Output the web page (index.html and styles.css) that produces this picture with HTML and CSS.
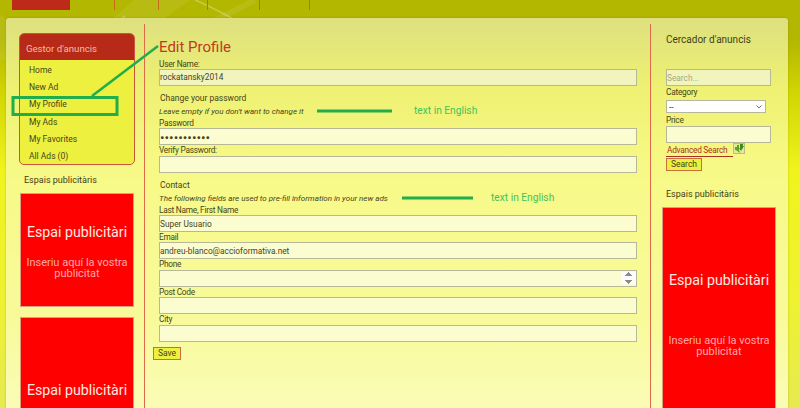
FILE: index.html
```html
<!DOCTYPE html>
<html lang="en">
<head>
<meta charset="utf-8">
<title>Edit Profile</title>
<link rel="stylesheet" href="styles.css">
</head>
<body>
<svg class="swirl" width="800" height="408" viewBox="0 0 800 408" fill="none" aria-hidden="true">
  <path d="M0 14C30 48 80 46 118 14L134 0L190 0C160 20 140 40 110 60L0 60Z" fill="#fff" opacity=".07"/>
  <path d="M195 0C215 8 230 18 255 30" stroke="#fff" stroke-width="1.5" opacity=".28"/>
  <path d="M255 0C225 16 205 26 170 40" stroke="#fff" stroke-width="6" opacity=".08"/>
  <path d="M6 28C40 50 90 46 125 16" stroke="#fff" stroke-width="2" opacity=".25"/>
</svg>
<div class="topbar">
  <div class="tab"></div>
  <div class="ticks"><i></i><i></i><i></i><i></i><i></i></div>
</div>
<div class="panel">
  <aside class="left">
    <nav class="menu">
      <h3 class="menu-title">Gestor d'anuncis</h3>
      <ul class="menu-list">
        <li>Home</li>
        <li>New Ad</li>
        <li>My Profile</li>
        <li>My Ads</li>
        <li>My Favorites</li>
        <li>All Ads (0)</li>
      </ul>
    </nav>
    <h4 class="side-title side-title-left">Espais publicitàris</h4>
    <div class="ad ad-one">
      <p class="ad-big">Espai publicitàri</p>
      <p class="ad-small">Inseriu aquí la vostra publicitat</p>
    </div>
    <div class="ad ad-two">
      <p class="ad-big">Espai publicitàri</p>
    </div>
  </aside>
  <main class="main">
    <h1 class="title">Edit Profile</h1>
    <form class="form">
      <label class="lbl">User Name:</label>
      <input class="field field-ro" type="text" value="rockatansky2014" readonly>
      <div class="legend">Change your password</div>
      <div class="note">Leave empty if you don't want to change it</div>
      <label class="lbl">Password</label>
      <input class="field field-pass" type="password" value="abcdefghijk">
      <label class="lbl">Verify Password:</label>
      <input class="field" type="password">
      <div class="legend">Contact</div>
      <div class="note">The following fields are used to pre-fill information in your new ads</div>
      <label class="lbl">Last Name, First Name</label>
      <input class="field" type="text" value="Super Usuario">
      <label class="lbl">Email</label>
      <input class="field" type="text" value="andreu-blanco@accioformativa.net">
      <label class="lbl">Phone</label>
      <input class="field" type="number">
      <label class="lbl">Post Code</label>
      <input class="field" type="text">
      <label class="lbl">City</label>
      <input class="field" type="text">
      <button class="btn btn-save" type="button">Save</button>
    </form>
  </main>
  <aside class="right">
    <h4 class="side-title search-title">Cercador d'anuncis</h4>
    <input class="field field-side field-ro" type="text" placeholder="Search...">
    <label class="lbl lbl-side">Category</label>
    <select class="select"><option>--</option></select>
    <label class="lbl lbl-side">Price</label>
    <input class="field field-side" type="text">
    <div class="adv">
      <a class="adv-link">Advanced Search</a>
      <svg class="adv-icon" width="12" height="11" viewBox="0 0 12 11" aria-hidden="true">
        <rect x=".5" y=".5" width="11" height="10" fill="#e4e89a" stroke="#b9bd8a"/>
        <path d="M2 4h2V2h2v5l1 3-4-3H2z" fill="#5aa51e"/>
        <path d="M7 1h3v2h1L8 8 6 5h1z" fill="#3f8f14"/>
      </svg>
    </div>
    <button class="btn btn-search" type="button">Search</button>
    <h4 class="side-title side-title-right">Espais publicitàris</h4>
    <div class="ad ad-tall">
      <p class="ad-big">Espai publicitàri</p>
      <p class="ad-small">Inseriu aquí la vostra publicitat</p>
    </div>
  </aside>
</div>
<svg class="marks" width="800" height="408" viewBox="0 0 800 408" fill="none" aria-hidden="true">
  <rect x="13" y="97.5" width="104" height="17" stroke="#1fae4b" stroke-width="3"/>
  <path d="M92 96L158 46" stroke="#1fae4b" stroke-width="2.5"/>
  <path d="M317 111H392M402 198H473" stroke="#1fae4b" stroke-width="3"/>
</svg>
<span class="mark-text mark-one">text in English</span>
<span class="mark-text mark-two">text in English</span>
</body>
</html>
```
FILE: styles.css
```css
* { box-sizing: border-box; }
html, body { margin: 0; padding: 0; }
body {
  position: relative;
  width: 800px;
  height: 408px;
  overflow: hidden;
  font-family: Roboto, "Open Sans", sans-serif;
  font-size: 8.5px;
  color: #45451c;
  background: linear-gradient(#b3b700 0, #b3b700 40px, #d0d400 90px, #f0f41c 170px, #eef230 300px, #e6ea50 408px);
}
.swirl { position: absolute; left: 0; top: 0; }
.topbar { position: relative; height: 18px; display: flex; padding-left: 12px; }
.tab { width: 58px; height: 10px; background: #bd2a19; }
.ticks { display: flex; margin-left: 44px; }
.ticks i { width: 1px; height: 10px; background: #c9691a; margin-right: 43px; }
.ticks i:nth-child(2) { margin-right: 48px; }
.ticks i:nth-child(3) { margin-right: 51px; }
.ticks i:nth-child(4) { margin-right: 49px; }
.panel {
  position: relative;
  margin-left: 6px;
  width: 782px;
  height: 390px;
  border-radius: 3px 3px 0 0;
  background: linear-gradient(#dde07e 0, #eef172 70px, #f7f986 150px, #f8fa9a 300px, #fafcb6 390px);
  box-shadow: 0 0 2px rgba(110, 110, 0, .45);
  display: grid;
  grid-template-columns: 139px 505px 138px;
  overflow: hidden;
}
.left { padding: 9px 0 0 13px; margin-top: 6px; border-right: 1px solid #df6a4a; }
.menu {
  width: 116px;
  height: 132px;
  border: 1px solid #c9563c;
  border-radius: 5px;
  background: #eef03f;
  overflow: hidden;
}
.menu-title {
  margin: 0;
  height: 26px;
  padding: 8px 0 0 6px;
  font-size: 9.6px;
  line-height: 13px;
  font-weight: 400;
  color: #f2bfa0;
  background: #b82a18;
}
.menu-list { list-style: none; margin: 0; padding: 2px 0 0 9px; }
.menu-list li { height: 17.2px; line-height: 17.2px; }
.side-title { margin: 0; font-weight: 400; font-size: 9px; line-height: 13px; color: #3f3f18; }
.side-title-left { margin: 9px 0 0 5px; }
.ad {
  width: 114px;
  background: #ff0000;
  border: 1px solid #d9a080;
  color: #fff;
  text-align: center;
  overflow: hidden;
}
.ad p { margin: 0; }
.ad-big { font-size: 14.2px; line-height: 18px; color: #ffe9e0; }
.ad-small { font-size: 11px; line-height: 11px; color: #ffa8a8; }
.ad-one { height: 114px; margin: 6px 0 0 1px; padding-top: 29px; }
.ad-one .ad-small { margin-top: 16px; padding: 0 2px; }
.ad-two { height: 120px; margin: 10px 0 0 1px; padding-top: 63px; }
.main { padding: 14px 0 0 14px; margin-top: 6px; }
.title { margin: 0 0 2.5px; font-size: 15px; line-height: 18px; font-weight: 400; color: #c1391e; }
.form { display: flex; flex-direction: column; align-items: flex-start; }
.lbl { display: block; font-size: 8.3px; letter-spacing: -.25px; line-height: 10.4px; height: 10.4px; }
.field {
  display: block;
  width: 478px;
  height: 17px;
  padding: 0;
  border: 1px solid #b6b89a;
  background: #fbfccf;
  font: inherit;
  font-size: 8.3px;
  color: #45451c;
  border-radius: 0;
  outline: 0;
}
.field-ro { background: #f2f4be; }
.field-pass { font-size: 13.5px; }
.field::-webkit-inner-spin-button { opacity: 1; height: 12px; width: 7px; }
.legend { margin: 6px 0 0 1px; line-height: 12px; height: 12px; }
.note { margin-top: 2px; font-size: 8px; font-style: italic; line-height: 11px; height: 12px; }
.btn {
  display: block;
  padding: 0;
  font: inherit;
  color: #45451c;
  background: #eef03f;
  border: 1px solid #c9703c;
  line-height: 11px;
}
.btn-save { width: 28px; height: 13px; margin: 5px 0 0 -6px; }
.right { padding: 0 0 0 15px; margin-top: 6px; border-left: 1px solid #df6a4a; }
.search-title { margin: 9px 0 23px; font-size: 10px; }
.field-side { width: 105px; }
.field-side::placeholder { color: #a9aa80; opacity: 1; }
.lbl-side { margin: 1px 0 0; }
.select {
  appearance: none;
  display: block;
  width: 100px;
  height: 13px;
  margin: 3px 0 2px;
  padding: 0 2px;
  font: inherit;
  color: #333;
  background: #fff url("data:image/svg+xml,%3Csvg xmlns='http://www.w3.org/2000/svg' width='6' height='4'%3E%3Cpath d='M.5.5 3 3 5.500.5' fill='none' stroke='%23777'/%3E%3C/svg%3E") no-repeat right 3px center;
  border: 1px solid #b6b89a;
  border-radius: 0;
}
.adv { display: flex; align-items: flex-start; height: 15px; }
.adv-link { margin-top: 2px; width: 67px; padding-left: 1px; font-size: 8.3px; letter-spacing: -.25px; line-height: 11px; height: 12px; color: #a8321c; border-bottom: 1px solid #a8321c; }
.adv-icon { margin-top: 0; }
.btn-search { width: 36px; height: 13px; }
.side-title-right { margin-top: 17px; }
.ad-tall { width: 114px; height: 220px; margin: 6px 0 0 -4px; padding-top: 63px; }
.ad-tall .ad-small { margin-top: 46px; padding: 0 2px; }
.marks { position: absolute; left: 0; top: 0; }
.mark-text { position: absolute; font-size: 10.2px; line-height: 13px; color: #3fc45a; }
.mark-one { left: 414px; top: 104px; }
.mark-two { left: 491px; top: 191px; }
```
